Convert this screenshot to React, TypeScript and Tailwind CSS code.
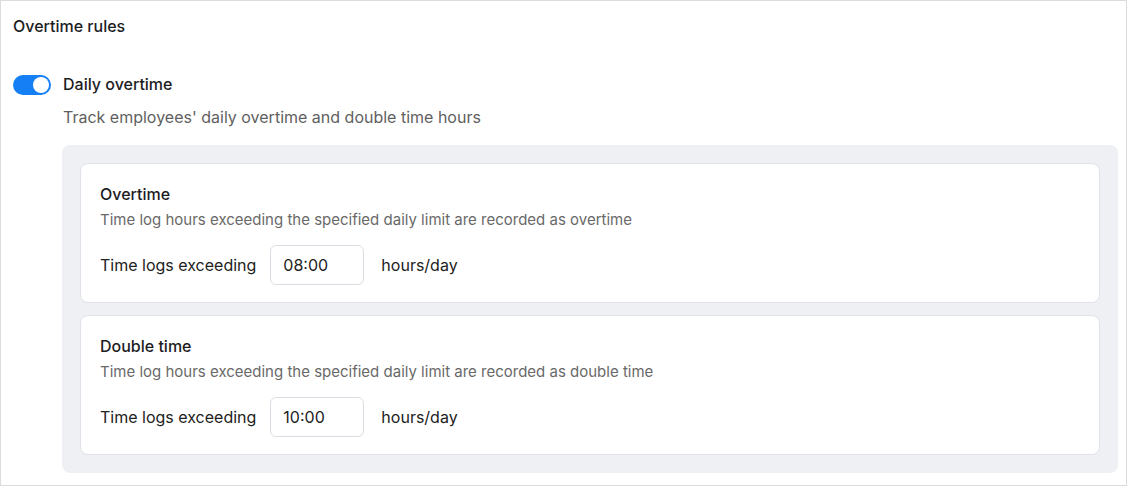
import { useState } from 'react';

type RuleProps = {
  title: string;
  description: string;
  value: string;
};

function RuleCard({ title, description, value }: RuleProps) {
  const [hours, setHours] = useState(value);
  return (
    <div className="h-[140px] rounded-lg border border-[#dfe3e9] bg-white px-[19px] pt-5">
      <h3 className="text-[16px] leading-5 font-medium text-[#1d1d1f]">{title}</h3>
      <p className="mt-[6px] text-[15px] leading-5 text-[#696969]">{description}</p>
      <div className="mt-[15px] flex items-center">
        <span className="text-[16px] text-[#222]">Time logs exceeding</span>
        <input
          value={hours}
          onChange={(e) => setHours(e.target.value)}
          className="ml-[14px] h-10 w-[94px] rounded-md border border-[#d9dde3] px-3 text-[16px] text-[#222] outline-none"
        />
        <span className="ml-[17px] text-[16px] text-[#222]">hours/day</span>
      </div>
    </div>
  );
}

export default function App() {
  const [enabled, setEnabled] = useState(true);

  return (
    <div
      className="box-border h-[486px] w-[1127px] border border-[#dcdcdc] bg-white pl-3 pr-2 pt-[15px]"
      style={{ fontFamily: 'Inter, "Noto Sans", sans-serif' }}
    >
      <h2 className="text-[16px] leading-5 font-medium text-[#1d1d1f]">Overtime rules</h2>

      <div className="mt-[37px] flex h-6 items-center">
        <button
          onClick={() => setEnabled(!enabled)}
          className={`relative h-5 w-[38px] rounded-full transition ${enabled ? 'bg-[#1580f6]' : 'bg-gray-300'}`}
        >
          <span
            className={`absolute top-[2px] h-4 w-4 rounded-full bg-white transition ${enabled ? 'left-[20px]' : 'left-[2px]'}`}
          />
        </button>
        <span className="ml-3 -mt-[2px] text-[16px] font-medium text-[#1d1d1f]">Daily overtime</span>
      </div>
      <p className="mt-[10px] ml-[50px] text-[16px] leading-5 text-[#5f5f5f]">
        Track employees' daily overtime and double time hours
      </p>

      <div className="mt-[18px] ml-[49px] flex flex-col gap-3 rounded-lg bg-[#eef0f4] p-[18px]">
        <RuleCard
          title="Overtime"
          description="Time log hours exceeding the specified daily limit are recorded as overtime"
          value="08:00"
        />
        <RuleCard
          title="Double time"
          description="Time log hours exceeding the specified daily limit are recorded as double time"
          value="10:00"
        />
      </div>
    </div>
  );
}
